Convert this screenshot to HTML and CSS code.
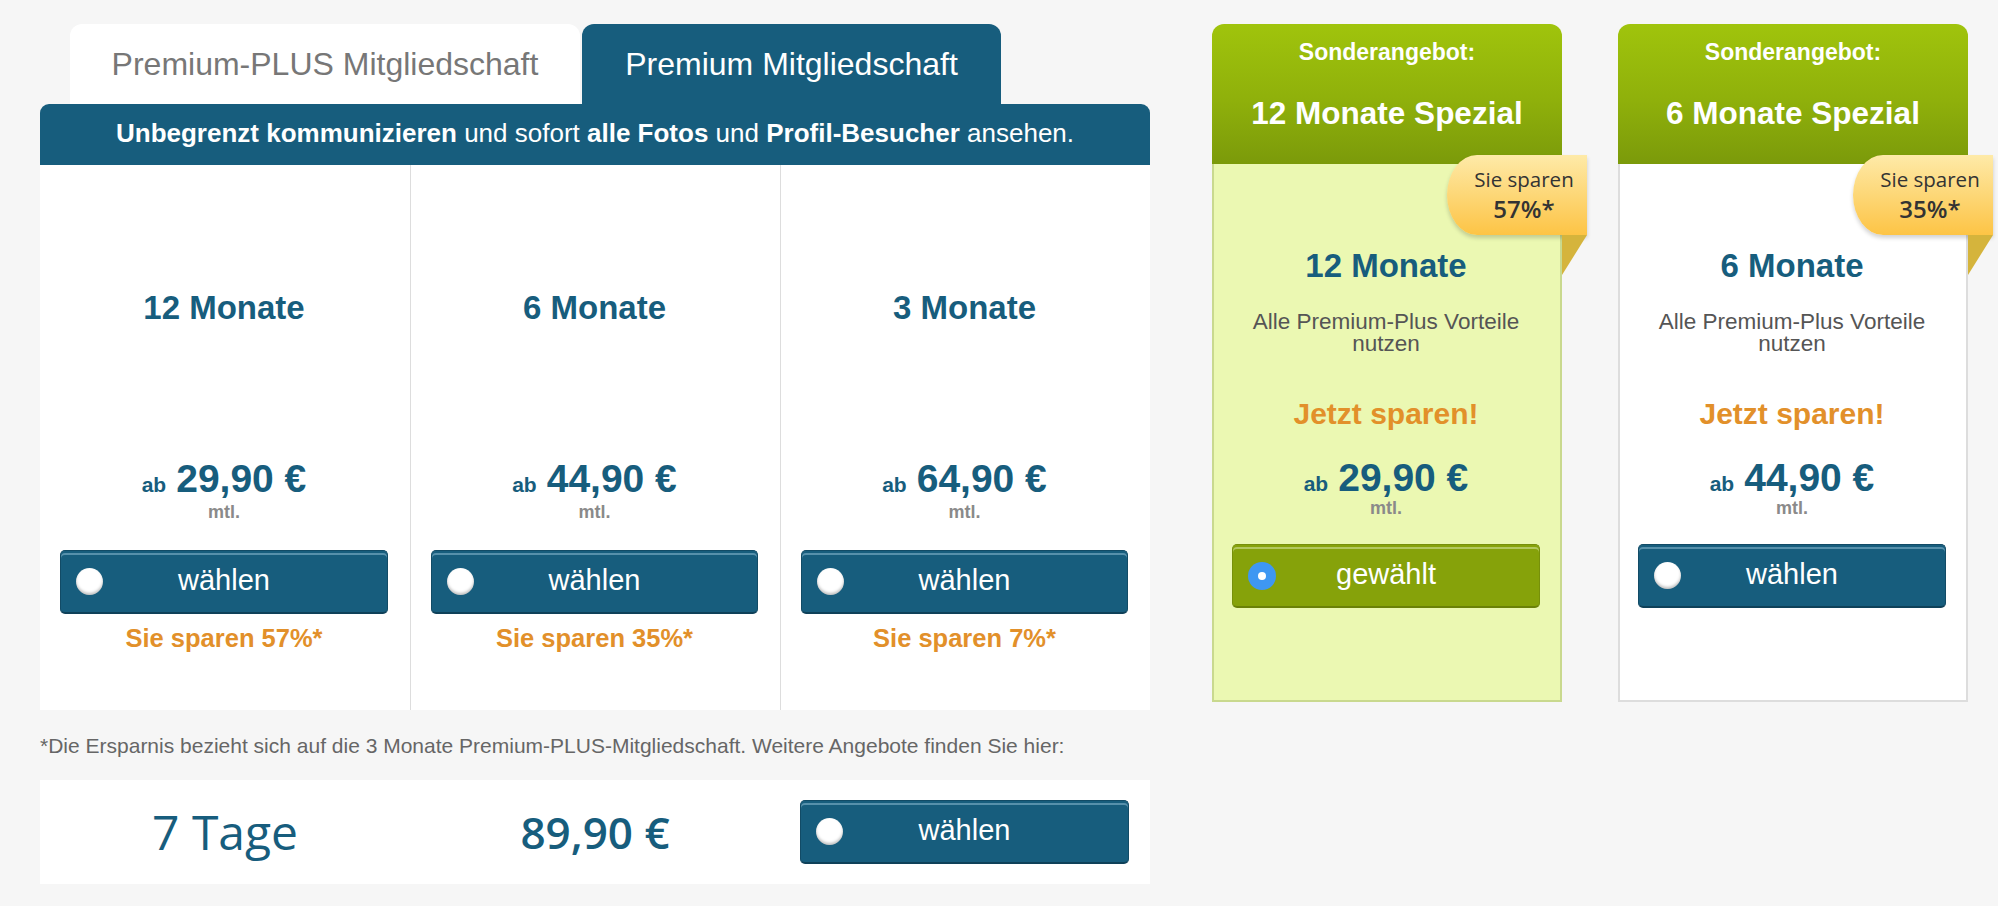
FILE: index.html
```html
<!DOCTYPE html>
<html lang="de">
<head>
<meta charset="utf-8">
<title>Premium Mitgliedschaft</title>
<link rel="stylesheet" href="styles.css">
</head>
<body>
<div class="page">
  <section class="membership">
    <div class="tabs">
      <div class="tab tab-inactive">Premium-PLUS Mitgliedschaft</div>
      <div class="tab tab-active">Premium Mitgliedschaft</div>
    </div>
    <div class="banner"><b>Unbegrenzt kommunizieren</b> und sofort <b>alle Fotos</b> und <b>Profil-Besucher</b> ansehen.</div>
    <div class="plans">
      <div class="plan">
        <div class="plan-title">12 Monate</div>
        <div class="price"><span class="ab">ab</span><span class="amount">29,90 €</span></div>
        <div class="mtl">mtl.</div>
        <button class="choose"><span class="radio"></span><span class="label">wählen</span></button>
        <div class="save">Sie sparen 57%*</div>
      </div>
      <div class="plan">
        <div class="plan-title">6 Monate</div>
        <div class="price"><span class="ab">ab</span><span class="amount">44,90 €</span></div>
        <div class="mtl">mtl.</div>
        <button class="choose"><span class="radio"></span><span class="label">wählen</span></button>
        <div class="save">Sie sparen 35%*</div>
      </div>
      <div class="plan">
        <div class="plan-title">3 Monate</div>
        <div class="price"><span class="ab">ab</span><span class="amount">64,90 €</span></div>
        <div class="mtl">mtl.</div>
        <button class="choose"><span class="radio"></span><span class="label">wählen</span></button>
        <div class="save">Sie sparen 7%*</div>
      </div>
    </div>
    <p class="footnote">*Die Ersparnis bezieht sich auf die 3 Monate Premium-PLUS-Mitgliedschaft. Weitere Angebote finden Sie hier:</p>
    <div class="trial">
      <div class="trial-name">7 Tage</div>
      <div class="trial-price">89,90 €</div>
      <div class="trial-action">
        <button class="choose"><span class="radio"></span><span class="label">wählen</span></button>
      </div>
    </div>
  </section>

  <section class="offers">
    <div class="offer offer-selected">
      <div class="offer-head">
        <div class="offer-kicker">Sonderangebot:</div>
        <div class="offer-name">12 Monate Spezial</div>
      </div>
      <div class="offer-body">
        <div class="plan-title">12 Monate</div>
        <div class="offer-desc">Alle Premium-Plus Vorteile<br>nutzen</div>
        <div class="offer-cta">Jetzt sparen!</div>
        <div class="price offer-price"><span class="ab">ab</span><span class="amount">29,90 €</span></div>
        <div class="mtl">mtl.</div>
        <button class="choose choose-green"><span class="radio radio-on"></span><span class="label">gewählt</span></button>
      </div>
      <div class="ribbon"><span class="ribbon-top">Sie sparen</span><span class="ribbon-pct">57%*</span></div>
      <div class="ribbon-fold"></div>
    </div>

    <div class="offer">
      <div class="offer-head">
        <div class="offer-kicker">Sonderangebot:</div>
        <div class="offer-name">6 Monate Spezial</div>
      </div>
      <div class="offer-body">
        <div class="plan-title">6 Monate</div>
        <div class="offer-desc">Alle Premium-Plus Vorteile<br>nutzen</div>
        <div class="offer-cta">Jetzt sparen!</div>
        <div class="price offer-price"><span class="ab">ab</span><span class="amount">44,90 €</span></div>
        <div class="mtl">mtl.</div>
        <button class="choose"><span class="radio"></span><span class="label">wählen</span></button>
      </div>
      <div class="ribbon"><span class="ribbon-top">Sie sparen</span><span class="ribbon-pct">35%*</span></div>
      <div class="ribbon-fold"></div>
    </div>
  </section>
</div>
</body>
</html>
```

FILE: styles.css
```css
* {
  box-sizing: border-box;
}

html, body {
  margin: 0;
  padding: 0;
  background: #f6f6f6;
}

body {
  font-family: "Liberation Sans", Arial, Helvetica, sans-serif;
  color: #333;
}

.page {
  display: flex;
  align-items: flex-start;
  padding: 24px 0 0 40px;
}

/* ---------- left: membership ---------- */
.membership {
  width: 1110px;
  flex: none;
}

.tabs {
  display: flex;
  gap: 2px;
  padding-left: 30px;
  height: 80px;
}

.tab {
  display: flex;
  align-items: center;
  justify-content: center;
  border-radius: 12px 12px 0 0;
  font-size: 32px;
  padding-top: 1px;
}

.tab-inactive {
  width: 510px;
  background: #ffffff;
  color: #777777;
}

.tab-active {
  width: 419px;
  background: #175d7d;
  color: #ffffff;
}

.banner {
  height: 61px;
  background: #175d7d;
  border-radius: 9px 9px 0 0;
  color: #ffffff;
  font-size: 26px;
  display: flex;
  align-items: center;
  justify-content: center;
  white-space: pre-wrap;
  padding-bottom: 2px;
}

.banner b {
  font-weight: 700;
}

.plans {
  display: grid;
  grid-template-columns: repeat(3, 1fr);
  background: #ffffff;
  height: 545px;
}

.plan {
  display: flex;
  flex-direction: column;
  align-items: center;
  padding: 123px 22px 0 20px;
  border-left: 1px solid #dddddd;
}

.plan:first-child {
  border-left: none;
}

.plan-title {
  font-size: 33px;
  line-height: 40px;
  font-weight: 700;
  color: #175d7d;
}

.price {
  margin-top: 131px;
  line-height: 40px;
  color: #175d7d;
  font-weight: 700;
  white-space: nowrap;
}

.ab {
  font-size: 21px;
  margin-right: 10px;
}

.amount {
  font-size: 39px;
}

.mtl {
  margin-top: -6px;
  font-size: 18px;
  line-height: 22px;
  font-weight: 700;
  color: #8a8a8a;
}

.choose {
  margin-top: 27px;
  width: 100%;
  height: 64px;
  display: grid;
  grid-template-columns: 1fr auto 1fr;
  align-items: center;
  padding: 0 15px;
  background: #175d7d;
  border: 1px solid #124b66;
  border-bottom: 2px solid #0f4159;
  border-radius: 5px;
  box-shadow: inset 0 2px 0 #175d7d, inset 0 4px 0 rgba(140, 185, 210, 0.55);
  font-family: "Liberation Sans", Arial, Helvetica, sans-serif;
  font-size: 29px;
  color: #ffffff;
  cursor: pointer;
}

.choose .label {
  grid-column: 2;
  padding-bottom: 2px;
}

.radio {
  grid-column: 1;
  justify-self: start;
  width: 27px;
  height: 27px;
  border-radius: 50%;
  background: #ffffff;
  box-shadow: inset 0 -2px 3px rgba(0, 0, 0, 0.25);
}

.radio-on {
  width: 28px;
  height: 28px;
  background: #3e97f2;
  box-shadow: none;
  display: flex;
  align-items: center;
  justify-content: center;
}

.radio-on::after {
  content: "";
  width: 8px;
  height: 8px;
  border-radius: 50%;
  background: #ffffff;
}

.choose-green {
  background: #86a20a;
  border-color: #77900a;
  border-bottom-color: #6a8108;
  box-shadow: inset 0 2px 0 #86a20a, inset 0 4px 0 rgba(210, 225, 150, 0.6);
}

.save {
  margin-top: 9px;
  font-size: 25.5px;
  line-height: 30px;
  font-weight: 700;
  color: #e2902a;
}

.footnote {
  margin: 24px 0 0 0;
  font-size: 21px;
  line-height: 24px;
  color: #666666;
}

.trial {
  margin-top: 22px;
  height: 104px;
  background: #ffffff;
  display: grid;
  grid-template-columns: repeat(3, 1fr);
  align-items: center;
}

.trial-name,
.trial-price {
  font-family: "Open Sans", "Liberation Sans", sans-serif;
  color: #175d7d;
  text-align: center;
  font-size: 48px;
  line-height: 60px;
}

.trial-price {
  font-weight: 600;
  font-size: 44px;
}

.trial-action {
  padding: 0 21px 0 20px;
}

.trial-action .choose {
  margin-top: 0;
}

/* ---------- right: special offers ---------- */
.offers {
  display: flex;
  gap: 56px;
  margin-left: 62px;
}

.offer {
  position: relative;
  width: 350px;
  flex: none;
}

.offer-head {
  height: 140px;
  border-radius: 12px 12px 0 0;
  background: linear-gradient(to bottom, #a0c40c 0%, #8fb00b 55%, #7b9a0a 100%);
  color: #ffffff;
  text-align: center;
  font-weight: 700;
  padding-top: 13px;
}

.offer-kicker {
  font-size: 23px;
  line-height: 30px;
}

.offer-name {
  margin-top: 28px;
  font-size: 31.5px;
  line-height: 36px;
}

.offer-body {
  height: 538px;
  background: #ffffff;
  border: 2px solid #dddddd;
  border-top: none;
  display: flex;
  flex-direction: column;
  align-items: center;
  padding: 82px 20px 0 18px;
}

.offer-selected .offer-body {
  background: #ebf8b2;
  border-color: #c9d98e;
}

.offer-desc {
  margin-top: 25px;
  font-size: 22.5px;
  line-height: 22px;
  color: #555555;
  text-align: center;
}

.offer-cta {
  margin-top: 42px;
  font-size: 30px;
  line-height: 34px;
  font-weight: 700;
  color: #e2902a;
}

.offer-price {
  margin-top: 27px;
}

.offer-body .mtl {
  margin-top: -9px;
}

.offer-body .choose {
  margin-top: 25px;
}

.ribbon {
  position: absolute;
  top: 131px;
  right: -25px;
  width: 140px;
  height: 80px;
  border-radius: 30px 0 0 30px / 40px 0 0 40px;
  background: linear-gradient(to bottom, #feeaa8 0%, #fdd777 50%, #fdc445 100%);
  box-shadow: 0 3px 4px rgba(0, 0, 0, 0.18);
  display: flex;
  flex-direction: column;
  align-items: center;
  justify-content: center;
  padding-left: 14px;
  font-family: "Open Sans", "Liberation Sans", sans-serif;
  color: #333333;
}

.ribbon-top {
  font-size: 20.5px;
  line-height: 28.5px;
}

.ribbon-pct {
  font-size: 24px;
  line-height: 32.5px;
  font-weight: 600;
  margin-top: -1px;
}

.ribbon-fold {
  position: absolute;
  top: 211px;
  right: -25px;
  width: 0;
  height: 0;
  border-top: 40px solid #d5b43c;
  border-right: 25px solid transparent;
}
```
